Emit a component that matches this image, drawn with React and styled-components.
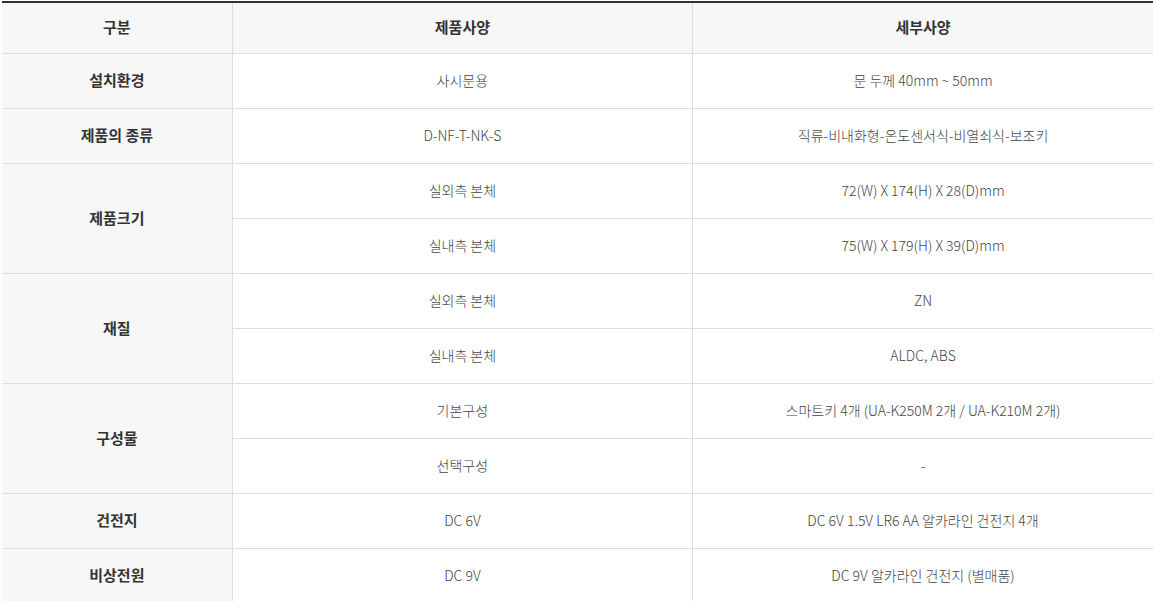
import React from "react";
import styled, { createGlobalStyle } from "styled-components";

const GlobalStyle = createGlobalStyle`
  html, body {
    margin: 0;
    padding: 0;
    background: #fff;
  }
  body {
    font-family: "Noto Sans CJK KR", "Noto Sans", sans-serif;
  }
`;

const specs = [
  { label: "설치환경", rows: [["사시문용", "문 두께 40mm ~ 50mm"]] },
  { label: "제품의 종류", rows: [["D-NF-T-NK-S", "직류-비내화형-온도센서식-비열쇠식-보조키"]] },
  {
    label: "제품크기",
    rows: [
      ["실외측 본체", "72(W) X 174(H) X 28(D)mm"],
      ["실내측 본체", "75(W) X 179(H) X 39(D)mm"],
    ],
  },
  {
    label: "재질",
    rows: [
      ["실외측 본체", "ZN"],
      ["실내측 본체", "ALDC, ABS"],
    ],
  },
  {
    label: "구성물",
    rows: [
      ["기본구성", "스마트키 4개 (UA-K250M 2개 / UA-K210M 2개)"],
      ["선택구성", "-"],
    ],
  },
  { label: "건전지", rows: [["DC 6V", "DC 6V 1.5V LR6 AA 알카라인 건전지 4개"]] },
  { label: "비상전원", rows: [["DC 9V", "DC 9V 알카라인 건전지 (별매품)"]] },
];

const App = () => {
  return (
    <Wrapper>
      <GlobalStyle />
      <Table>
        <colgroup>
          <col style={{ width: "20%" }} />
          <col style={{ width: "40%" }} />
          <col style={{ width: "40%" }} />
        </colgroup>
        <thead>
          <tr>
            <Th>구분</Th>
            <Th>제품사양</Th>
            <Th>세부사양</Th>
          </tr>
        </thead>
        <tbody>
          {specs.map((group) =>
            group.rows.map((row, i) => (
              <tr key={group.label + i}>
                {i === 0 && <Label rowSpan={group.rows.length}>{group.label}</Label>}
                <Td>{row[0]}</Td>
                <Td>{row[1]}</Td>
              </tr>
            ))
          )}
        </tbody>
      </Table>
    </Wrapper>
  );
};

export default App;

const Wrapper = styled.div`
  padding: 1px 0 0 2px;
  overflow: hidden;
`;

const Table = styled.table`
  width: 1151px;
  border-collapse: collapse;
  table-layout: fixed;
  border-top: 2px solid #333;
`;

const Th = styled.th`
  height: 47px;
  padding: 0 0 3px;
  background: #f7f7f7;
  border-bottom: 1px solid #ddd;
  border-left: 1px solid #ddd;
  font-size: 15px;
  font-weight: 700;
  color: #333;
  text-align: center;
  vertical-align: middle;

  &:first-child {
    border-left: none;
  }
`;

const Label = styled.td`
  padding: 0 0 3px;
  background: #f7f7f7;
  border-bottom: 1px solid #ddd;
  font-size: 15px;
  font-weight: 700;
  color: #333;
  text-align: center;
  vertical-align: middle;
`;

const Td = styled.td`
  height: 51px;
  padding: 0 0 3px;
  border-bottom: 1px solid #ddd;
  border-left: 1px solid #ddd;
  font-size: 14px;
  font-weight: 300;
  color: #444;
  text-align: center;
  vertical-align: middle;
`;
